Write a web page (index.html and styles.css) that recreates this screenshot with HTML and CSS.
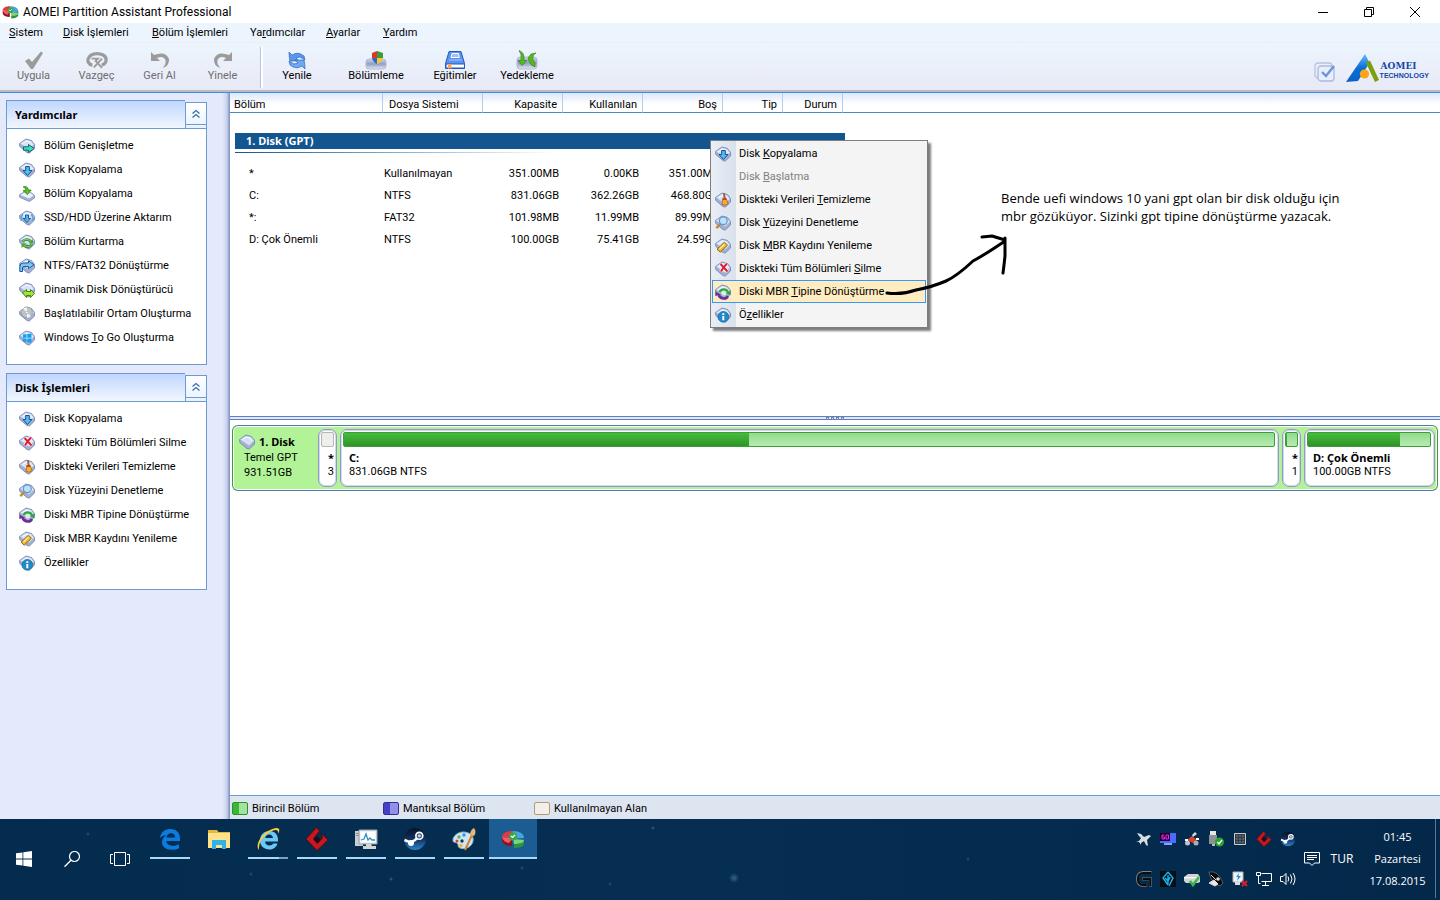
FILE: index.html
```html
<!DOCTYPE html>
<html lang="tr">
<head>
    <meta charset="UTF-8">
    <meta name="viewport" content="width=device-width, initial-scale=1">
    <title>AOMEI Partition Assistant Professional</title>
    <link rel="stylesheet" href="styles.css">
</head>
<body>
    <svg class="sprite" aria-hidden="true">
        <defs>
            <linearGradient id="gBlue" x1="0" y1="0" x2="0" y2="1"><stop offset="0" stop-color="#6db8ff"/><stop offset=".5" stop-color="#0a6fd4"/><stop offset="1" stop-color="#0a63c4"/></linearGradient>
            <linearGradient id="gTray" x1="0" y1="0" x2="0" y2="1"><stop offset="0" stop-color="#cfd6ec"/><stop offset=".5" stop-color="#8f9cc4"/><stop offset="1" stop-color="#e4e8f6"/></linearGradient>
            <linearGradient id="gSteam" x1="0" y1="0" x2="0" y2="1"><stop offset="0" stop-color="#0a1224"/><stop offset=".5" stop-color="#10305f"/><stop offset="1" stop-color="#2a86c8"/></linearGradient>
        </defs>
        <symbol id="disk" viewBox="0 0 16 16">
            <path d="M.5 5.500 7 1 12.500 2.500 15.500 6.500v3.500L10.400 15 8 14.600.8 8.500z" fill="#a3b0d2" stroke="#7080ae" stroke-width=".8"/>
            <path d="M1.200 5.600 7 1.700l5 1.400 3 3.600-5 4.800z" fill="#d5e1f6"/>
            <path d="M3.500 5.800 7.300 3.200l3.600 1 2 2.600" fill="none" stroke="#fff" stroke-width=".8"/>
        </symbol>
        <symbol id="extend" viewBox="0 0 16 16"><use href="#disk"/><path d="M4.500 8.800h5V6.500l5.800 4-5.800 4v-2.300h-5z" fill="#3fe09a" stroke="#05568c" stroke-width=".9"/></symbol>
        <symbol id="copy" viewBox="0 0 16 16"><use href="#disk"/><path d="M6.700 4.500h3.600v4H13L8.500 13.500 4 8.500h2.700z" fill="#5cb8ee" stroke="#0c5595" stroke-width="1"/></symbol>
        <symbol id="partcopy" viewBox="0 0 16 16"><path d="M.5 8.800 5.800 5.400l5 .4 4.700 3.600v2.500l-5.300 3.600L.8 11.300z" fill="#a3b3d8" stroke="#7686b2" stroke-width=".8"/><path d="M1.400 8.900 6 6l4.600.4 4 3-4.500 3z" fill="#eaf0ff"/><path d="M4.200.8C7 .2 9 1 9.400 4h2.800L8.400 8.600 4 4.600h2.700C6.500 2.600 5.800 1.700 4.200.8z" fill="#58c41a" stroke="#24710a" stroke-width=".7"/></symbol>
        <symbol id="ssd" viewBox="0 0 16 16"><use href="#disk"/><path d="M2.500 11A6 6 0 0 1 4 4.300M13.500 11A6 6 0 0 0 12 4.300" fill="none" stroke="#5ba9dd" stroke-width="1.600"/><path d="M6.500 5h3v3.500h2.200L8 12.500 4.300 8.500h2.200z" fill="#5cb0ea" stroke="#0c5595" stroke-width=".9"/></symbol>
        <symbol id="recover" viewBox="0 0 16 16"><use href="#disk"/><path d="M3.500 7.500C6 4.500 10 5 12 7.500M13 10C11 13 7 13.500 4.500 11" fill="none" stroke="#2c7a23" stroke-width="2.600"/><path d="M3.500 7.500C6 4.500 10 5 12 7.500M13 10C11 13 7 13.500 4.500 11" fill="none" stroke="#79cd5b" stroke-width="1.300"/><path d="M14 5v4.200H9.500zM2.500 14V9.500h4.500z" fill="#4ba53a"/></symbol>
        <symbol id="ntfs" viewBox="0 0 16 16"><use href="#disk"/><path d="M.8 13.500V8.500Q.8 5 4.500 5H9.500V2.800l5.500 4-5.500 4V8.500H5q-1.500 0-1.500 1.500v3.500z" fill="#82c4ef" stroke="#1559a0" stroke-width="1"/></symbol>
        <symbol id="dynamic" viewBox="0 0 16 16"><use href="#disk"/><path d="m3.500 11 4-3.500v2h4v-2l4 4-4 4v-2h-4v2z" fill="#a4e333" stroke="#3c7a08" stroke-width=".9"/></symbol>
        <symbol id="bootable" viewBox="0 0 16 16"><use href="#disk"/><circle cx="8" cy="6.500" r="5.400" fill="#bfc4c6" stroke="#8d9498" stroke-width=".7"/><path d="M8 6.500 4 2.800A5.400 5.400 0 0 1 8 1.200zM8 6.500l4 3.700a5.400 5.400 0 0 1-4 1.600z" fill="#f2f4f4"/><circle cx="8" cy="6.500" r="1.300" fill="#fff" stroke="#8d9498" stroke-width=".5"/></symbol>
        <symbol id="wintogo" viewBox="0 0 16 16"><use href="#disk"/><path d="m4 4.600 3.500-.5v3.700H4zM8.300 4l4.200-.6v4.400H8.300zM4 8.500h3.500v3.600L4 11.600zM8.300 8.500h4.200v4.300l-4.200-.6z" fill="#10a0f0"/></symbol>
        <symbol id="delete" viewBox="0 0 16 16"><use href="#disk"/><path d="M5.500 3q3 3 7 7.500M12 2.500Q8.500 6 6 10.500" fill="none" stroke="#fff" stroke-width="3.400"/><path d="M5.500 3q3 3 7 7.500M12 2.500Q8.500 6 6 10.500" fill="none" stroke="#e01c35" stroke-width="2"/></symbol>
        <symbol id="wipe" viewBox="0 0 16 16"><use href="#disk"/><path d="M8 1.300 9.800 1l1 5.500-2 .3z" fill="#a06030"/><path d="M7.800 6.500h3.400l2 5.500q-3 2-6.200.5z" fill="#f0b030" stroke="#b35a18" stroke-width=".8"/><path d="M7.800 6.300h3.600v1.800H7.500z" fill="#c04418"/></symbol>
        <symbol id="check" viewBox="0 0 16 16"><use href="#disk"/><path d="M6 8.500 1.300 13.200" stroke="#b98b3c" stroke-width="2.400"/><circle cx="8.300" cy="5.700" r="3.900" fill="#b9e2fb" stroke="#6893c9" stroke-width="1.200"/></symbol>
        <symbol id="convert" viewBox="0 0 16 16"><use href="#disk"/><path d="M4.500 8C6.500 4.500 11 4.500 13 8" fill="none" stroke="#30a640" stroke-width="2.200"/><path d="M15.500 6.500v5L10.500 9z" fill="#30a640"/><path d="M13 12C11 15.500 6 15.500 3.500 11" fill="none" stroke="#6d2d9b" stroke-width="2.600"/><path d="M.3 12V7.500L6 10.500z" fill="#6d2d9b"/><circle cx="8.800" cy="9.600" r="2" fill="#d7f7d5"/></symbol>
        <symbol id="rebuild" viewBox="0 0 16 16"><use href="#disk"/><path d="m2 11.200 7.500-7 3 3-7.300 7z" fill="#f0b62c" stroke="#8a5a08" stroke-width=".9"/><path d="m4.500 11 5-4.700" stroke="#fff0b0" stroke-width="1.200"/></symbol>
        <symbol id="info" viewBox="0 0 16 16"><use href="#disk"/><circle cx="8.300" cy="9.800" r="5.400" fill="#2289c8" stroke="#11649e" stroke-width=".7"/><path d="M7.300 9h2v4.200h-2zM7.300 6.300h2v1.700h-2z" fill="#fff"/></symbol>

        <symbol id="pie" viewBox="0 0 24 18">
            <path d="M1 7v4c1 3 4 5 10 5V8z" fill="#8f1220"/><path d="M12 8 1 7C1 3 5 1 12 1z" fill="#dc3b45"/><path d="M1 7q1 5 7 6l4-5z" fill="#ef5d62"/>
            <path d="M12 1c7 0 11 3 11 7l-11 1z" fill="#45a6dc"/><path d="M23 8v3l-8-1-3-1z" fill="#1a6ea8"/>
            <path d="m12 9 11 1c0 3-3 4-10 4z" fill="#7fd37a"/><path d="M13 14c7 0 10-1 10-4v4c-1 3-5 4-10 4z" fill="#2c963a"/>
            <circle cx="12" cy="6.500" r="4" fill="#39a845"/><path d="m10 6 1.500 1.500L14 5" fill="none" stroke="#fff" stroke-width="1.200"/>
        </symbol>
        <symbol id="chevrons" viewBox="0 0 10 10"><path d="m1.500 4.500 3.500-3 3.500 3M1.500 8.500l3.500-3 3.500 3" fill="none" stroke="#3f6da6" stroke-width="1.300"/></symbol>
        <symbol id="steam" viewBox="0 0 24 24"><circle cx="12" cy="12" r="11" fill="url(#gSteam)"/><path d="M1.500 13 8 15.600 12 13l6-5" fill="none" stroke="#fff" stroke-width="2.600"/><circle cx="8" cy="16" r="3" fill="#fff"/><circle cx="16.300" cy="8.800" r="4.300" fill="#fff"/><circle cx="16.300" cy="8.800" r="2.600" fill="#24476e"/><circle cx="16.300" cy="8.800" r="1.600" fill="#c8d6e4"/></symbol>
        <symbol id="redgem" viewBox="0 0 24 24"><path d="m11.500.5 3 3.500-6 7.500 4 5L17.500 11l-1-4.500L23 13 12 23.500 1 12z" fill="#c8171f" stroke="#5b0a10" stroke-width="1"/><path d="m12 9 3.500 3.500-3.500 4-3.500-4z" fill="#1c0d18"/></symbol>
    </svg>

    <header class="titlebar">
        <svg class="app-icon"><use href="#pie"/></svg>
        <h1>AOMEI Partition Assistant Professional</h1>
        <div class="window-buttons">
            <button aria-label="Simge durumuna küçült"><svg viewBox="0 0 12 12"><path d="M1 6.500h10"/></svg></button>
            <button aria-label="Önceki boyut"><svg viewBox="0 0 12 12"><path d="M1.500 3.500h7v7h-7zM3.500 3.500v-2h7v7h-2"/></svg></button>
            <button aria-label="Kapat"><svg viewBox="0 0 12 12"><path d="m1 1 10 10M11 1 1 11"/></svg></button>
        </div>
    </header>

    <nav class="menubar">
        <button><u>S</u>istem</button>
        <button><u>D</u>isk İşlemleri</button>
        <button><u>B</u>ölüm İşlemleri</button>
        <button>Ya<u>r</u>dımcılar</button>
        <button><u>A</u>yarlar</button>
        <button><u>Y</u>ardım</button>
    </nav>

    <div class="toolbar">
        <div class="tools">
            <button class="tool" disabled>
                <svg viewBox="0 0 22 20"><path d="m2 11 4-2.500L9 12 18 1.500 20 3 10 19H8z" fill="#9b9b9b"/></svg>
                Uygula
            </button>
            <button class="tool" disabled>
                <svg viewBox="0 0 24 20"><path d="M7 15.500C2.500 15 1.500 11 2.500 8.500 4 4.500 7.500 3 12 3s10 2 10 6.500c0 3.500-2.500 5.500-5 6" fill="none" stroke="#9b9b9b" stroke-width="3.500"/><path d="M6 8.500h7L10.500 11l7 7.500M17.500 8.500l-9 9.500" stroke="#9b9b9b" stroke-width="2" fill="none"/></svg>
                Vazgeç
            </button>
            <button class="tool" disabled>
                <svg viewBox="0 0 22 20"><path d="M2 2v9h9L8 8q6-3 8.500 2 1 4-3 8 7-2 6.500-9Q17 .5 5 5z" fill="#9b9b9b"/></svg>
                Geri Al
            </button>
            <button class="tool" disabled>
                <svg viewBox="0 0 22 20"><path d="M20 2v9h-9l3-3Q8 5 5.500 10q-1 4 3 8Q1.500 16 2 9 5 .5 17 5z" fill="#9b9b9b"/></svg>
                Yinele
            </button>
            <span class="tool-divider"></span>
            <button class="tool">
                <svg viewBox="0 0 20 20"><path d="M2 2 5 5q6-4 12 1l1 4-5-3-4 1 3 3H3Q2 7 2 2z" fill="#5b96ea" stroke="#2f64bd" stroke-width=".7"/><path d="m18 19-3-3q-6 4-12-1l-1-4 5 3 4-1-3-3h9q1 4 1 9z" fill="#6ca8f5" stroke="#2f64bd" stroke-width=".7"/></svg>
                Yenile
            </button>
            <button class="tool">
                <svg viewBox="0 0 22 20"><rect x="1" y="9" width="20" height="10" rx="3" fill="url(#gTray)" stroke="#b3bbd6"/><path d="M12 1 7 3v5h5z" fill="#d93b28"/><path d="m12 1 6 2v5h-6z" fill="#3b9a3c"/><path d="M7 8h5v6Q8 12 7 8z" fill="#2e69c8"/><path d="M12 8h6q-1 4-6 6z" fill="#f6c62f"/></svg>
                Bölümleme
            </button>
            <button class="tool">
                <svg viewBox="0 0 22 20"><path d="M5 1.500h12l3.500 12v5H1.500v-5z" fill="#5b92ee" stroke="#2458c4"/><path d="M2 14h18.500v4H2z" fill="#fff" stroke="#2458c4"/><path d="M8 3.500h6.500l.8 4H7z" fill="#9dc0fa" stroke="#fff"/><path d="M5 10h13" stroke="#a8c8ff"/><path d="M4 14h3.500v5L6 18l-2 1z" fill="#f7a95a"/></svg>
                Eğitimler
            </button>
            <button class="tool">
                <svg viewBox="0 0 22 20"><rect x="1" y="7" width="20" height="12" rx="3" fill="url(#gTray)" stroke="#b3bbd6"/><path d="M3 .5q6 2 5 10h3l-5 5-4-5h3Q6 4 3 .5z" fill="#55b81e" stroke="#2d7a0c" stroke-width=".6"/><path d="M20 3q-4 2-3 7l2 3v4q-5-2-6-6l-1-3 3-4z" fill="#55b81e" stroke="#2d7a0c" stroke-width=".6"/></svg>
                Yedekleme
            </button>
        </div>
        <div class="brand">
            <svg class="brand-check" viewBox="0 0 22 20"><rect x="1" y="1" width="17" height="15" rx="3" fill="none" stroke="#b3c3e4" stroke-width="1.300"/><rect x="4" y="4" width="16" height="15" rx="3" fill="#e6edfb" stroke="#a9bbe0" stroke-width="1.300"/><path d="m8 10 4 4 8-10" fill="none" stroke="#6f93d4" stroke-width="2.400"/></svg>
            <svg class="brand-logo" viewBox="0 0 34 28"><path d="M1 28 20 0l4.500 9L13 27z" fill="url(#gBlue)"/><path d="M21 9 25 6.500l9 19.500-4 2z" fill="#7c9f0d"/><circle cx="19.500" cy="20" r="4.600" fill="#ffa412"/></svg>
            <div class="brand-text"><strong>AOMEI</strong><span>TECHNOLOGY</span></div>
        </div>
    </div>

    <div class="workspace">
        <aside class="sidebar">
            <section class="panel">
                <div class="panel-head">
                    <h2>Yardımcılar</h2>
                    <button class="collapse" aria-label="Yardımcılar panelini daralt"><svg><use href="#chevrons"/></svg></button>
                </div>
                <div class="panel-body">
                    <button><svg><use href="#extend"/></svg>Bölüm Genişletme</button>
                    <button><svg><use href="#copy"/></svg>Disk Kopyalama</button>
                    <button><svg><use href="#partcopy"/></svg>Bölüm Kopyalama</button>
                    <button><svg><use href="#ssd"/></svg>SSD/HDD Üzerine Aktarım</button>
                    <button><svg><use href="#recover"/></svg>Bölüm Kurtarma</button>
                    <button><svg><use href="#ntfs"/></svg>NTFS/FAT32 Dönüştürme</button>
                    <button><svg><use href="#dynamic"/></svg>Dinamik Disk Dönüştürücü</button>
                    <button><svg><use href="#bootable"/></svg>Başlatılabilir Ortam Oluşturma</button>
                    <button><svg><use href="#wintogo"/></svg><span>Windows <u>T</u>o Go Oluşturma</span></button>
                </div>
            </section>

            <section class="panel">
                <div class="panel-head">
                    <h2>Disk İşlemleri</h2>
                    <button class="collapse" aria-label="Disk İşlemleri panelini daralt"><svg><use href="#chevrons"/></svg></button>
                </div>
                <div class="panel-body">
                    <button><svg><use href="#copy"/></svg>Disk Kopyalama</button>
                    <button><svg><use href="#delete"/></svg>Diskteki Tüm Bölümleri Silme</button>
                    <button><svg><use href="#wipe"/></svg>Diskteki Verileri Temizleme</button>
                    <button><svg><use href="#check"/></svg>Disk Yüzeyini Denetleme</button>
                    <button><svg><use href="#convert"/></svg>Diski MBR Tipine Dönüştürme</button>
                    <button><svg><use href="#rebuild"/></svg>Disk MBR Kaydını Yenileme</button>
                    <button><svg><use href="#info"/></svg>Özellikler</button>
                </div>
            </section>
        </aside>

        <main class="content">
            <div class="list-area">
                <table class="partitions">
                    <colgroup>
                        <col class="col-name"><col class="col-fs"><col class="col-size"><col class="col-size"><col class="col-size"><col class="col-small"><col class="col-small"><col>
                    </colgroup>
                    <thead>
                        <tr><th>Bölüm</th><th>Dosya Sistemi</th><th class="num">Kapasite</th><th class="num">Kullanılan</th><th class="num">Boş</th><th class="num">Tip</th><th class="num">Durum</th><td></td></tr>
                    </thead>
                    <tbody>
                        <tr><td class="group" colspan="8"><div class="group-title">1. Disk (GPT)</div><div class="group-line"></div></td></tr>
                        <tr><td>*</td><td>Kullanılmayan</td><td class="num">351.00MB</td><td class="num">0.00KB</td><td class="num">351.00MB</td></tr>
                        <tr><td>C:</td><td>NTFS</td><td class="num">831.06GB</td><td class="num">362.26GB</td><td class="num">468.80GB</td></tr>
                        <tr><td>*:</td><td>FAT32</td><td class="num">101.98MB</td><td class="num">11.99MB</td><td class="num">89.99MB</td></tr>
                        <tr><td>D: Çok Önemli</td><td>NTFS</td><td class="num">100.00GB</td><td class="num">75.41GB</td><td class="num">24.59GB</td></tr>
                    </tbody>
                </table>

                <div class="context-menu">
                    <button><svg><use href="#copy"/></svg><span>Disk <u>K</u>opyalama</span></button>
                    <button disabled><svg></svg><span>Disk <u>B</u>aşlatma</span></button>
                    <button><svg><use href="#wipe"/></svg><span>Diskteki Verileri <u>T</u>emizleme</span></button>
                    <button><svg><use href="#check"/></svg><span>Disk <u>Y</u>üzeyini Denetleme</span></button>
                    <button><svg><use href="#rebuild"/></svg><span>Disk <u>M</u>BR Kaydını Yenileme</span></button>
                    <button><svg><use href="#delete"/></svg><span>Diskteki Tüm Bölümleri <u>S</u>ilme</span></button>
                    <button class="selected"><svg><use href="#convert"/></svg><span>Diski MBR <u>T</u>ipine Dönüştürme</span></button>
                    <button><svg><use href="#info"/></svg><span>Ö<u>z</u>ellikler</span></button>
                </div>

                <svg class="arrow" viewBox="0 0 124 66" aria-hidden="true"><path d="M2 60q15 2 29-3 16-3 30-9 11-5 27-20Q101 21 120 8M97 4l10-1 13 4M120 5v18l-1 9-1 8"/></svg>
                <p class="note">Bende uefi windows 10 yani gpt olan bir disk olduğu için<br>mbr gözüküyor. Sizinki gpt tipine dönüştürme yazacak.</p>
            </div>

            <div class="splitter"><i></i><i></i><i></i><i></i></div>

            <div class="map-area">
                <div class="disk-row">
                    <div class="disk-info">
                        <strong><svg><use href="#disk"/></svg>1. Disk</strong>
                        <span>Temel GPT</span>
                        <span>931.51GB</span>
                    </div>
                    <div class="part tiny">
                        <div class="bar unused"></div>
                        <strong>*</strong><span>3</span>
                    </div>
                    <div class="part wide">
                        <div class="bar"><div class="fill" style="width: 43.6%"></div></div>
                        <strong>C:</strong><span>831.06GB NTFS</span>
                    </div>
                    <div class="part tiny">
                        <div class="bar"><div class="fill" style="width: 12%"></div></div>
                        <strong>*</strong><span>1</span>
                    </div>
                    <div class="part medium">
                        <div class="bar"><div class="fill" style="width: 75.4%"></div></div>
                        <strong>D: Çok Önemli</strong><span>100.00GB NTFS</span>
                    </div>
                </div>
            </div>

            <footer class="legend">
                <span><i class="primary"></i>Birincil Bölüm</span>
                <span><i class="logical"></i>Mantıksal Bölüm</span>
                <span><i class="free"></i>Kullanılmayan Alan</span>
            </footer>
        </main>
    </div>

    <div class="taskbar">
        <div class="system-buttons">
            <button aria-label="Başlat"><svg viewBox="0 0 16 16"><path d="m0 2.300 6.500-.9v6.200H0zM7.300 1.300 16 0v7.600H7.300zM0 8.400h6.500v6.200L0 13.700zM7.300 8.400H16V16l-8.700-1.300z" fill="#fff"/></svg></button>
            <button aria-label="Ara"><svg viewBox="0 0 16 16"><circle cx="10.500" cy="5.500" r="5" fill="none" stroke="#fff" stroke-width="1.200"/><path d="M7 9.200.5 15.700" stroke="#fff" stroke-width="1.400"/></svg></button>
            <button aria-label="Görev görünümü"><svg class="taskview" viewBox="0 0 20 16"><path d="M4.500 1.500h11v13h-11zM3 3.500H.5v9H3M17 3.500h2.500v9H17" fill="none" stroke="#fff"/></svg></button>
        </div>
        <div class="apps">
            <button class="running" aria-label="Edge"><svg viewBox="0 0 24 24"><path d="M2 11C3 4 8 2 12.500 2 18.500 2 22 6 22 11.500V14H8.300c.3 3.500 3.700 4.800 7 4.800 2.200 0 4.200-.6 5.700-1.500v4c-2 1-4.500 1.500-7 1.500C7.500 22.800 4 19.500 4 15.300c0-3.100 1.600-5.700 4.500-7.100C5.500 8.200 3.500 9.500 2 11zM8.500 10.500H17c0-3-1.500-4.300-4-4.300S8.800 8 8.500 10.500z" fill="#0b7be0"/></svg></button>
            <button aria-label="Dosya Gezgini"><svg viewBox="0 0 24 24"><path d="M1 3h9l1.500 2H23v16H1z" fill="#e9b63c"/><path d="M1 6h22v15H1z" fill="#ffe28a"/><path d="M5 13h14v9h-4v-4H9v4H5z" fill="#2fb1ea"/></svg></button>
            <button class="running grouped" aria-label="Internet Explorer"><svg viewBox="0 0 24 24"><path d="M22 14.500H9c.3 2.800 2 4 4.500 4 2 0 3-.8 3.700-2h4.300c-1.300 4-4.500 6-8.200 6C8 22.500 4 19 4 13.500S8 4 13.200 4C19 4 22.500 8 22 14.500zM9.200 11H17c-.3-2.200-1.700-3.400-3.800-3.400-2.200 0-3.600 1.300-4 3.400z" fill="#6cc9f5"/><path d="M3 23C-1 19 4 9 12 4q9-5 11-2 1 1-1 5 .5-3-1-3.800Q18 2 11 7 2 14 3 23z" fill="#f7cf3a"/></svg></button>
            <button class="running" aria-label="Oyun"><svg><use href="#redgem"/></svg></button>
            <button class="running" aria-label="Görev Yöneticisi"><svg viewBox="0 0 24 24"><path d="M1 4h8v15H1z" fill="#c9cdd0"/><path d="M2 6h5v1H2zM2 8h5v1H2z" fill="#889096"/><path d="M5 3h18v14H5z" fill="#e0e5e8" stroke="#98a2a8"/><path d="M6.500 4.500h15v11h-15z" fill="#fff"/><path d="M7 13l3-1 2-5 2 6 2-2 2 2 3 0" fill="none" stroke="#2c8fc4" stroke-width="1.300"/><path d="M12 17h5l1 2h4v3H9v-3h3z" fill="#d1d6d9"/></svg></button>
            <button class="running" aria-label="Steam"><svg><use href="#steam"/></svg></button>
            <button class="running" aria-label="Paint"><svg viewBox="0 0 24 24"><path d="M11 5c7 0 11 4 10 9-1 6-8 9-13 7-3-1-1-4-3-5s-4 0-4-3c0-4 5-8 10-8z" fill="#cfe6f3" stroke="#8fb4ca"/><circle cx="7" cy="10" r="1.700" fill="#56b847"/><circle cx="12" cy="8" r="1.700" fill="#3b8ee0"/><circle cx="5" cy="14" r="1.500" fill="#e23b30"/><circle cx="10" cy="14" r="1.700" fill="#173a58"/><circle cx="9" cy="18.500" r="1.700" fill="#f0b62c"/><path d="m13 23 7-15" stroke="#d08430" stroke-width="2"/><path d="M18 8q0-5 4-7 3 4 0 8z" fill="#e6b776"/></svg></button>
            <button class="running active" aria-label="AOMEI Partition Assistant"><svg><use href="#pie"/></svg></button>
        </div>
        <div class="tray">
            <button aria-label="Uçak"><svg viewBox="0 0 16 16"><path d="m1 2 4 1 3 3 5-2 2 1-4 4 1 6-2-1-2-4-3 2v2l-2-3-3-1h3l2-3L3 5z" fill="#d9dde0"/></svg></button>
            <button aria-label="Ekran 60"><svg viewBox="0 0 16 16"><path d="M0 2h16v10H0z" fill="#4b6bff"/><path d="M0 2h10v8H0z" fill="#170030"/><path d="M4.500 4H2v4h2.500V6H2.500M6 4h2.500v4H6z" fill="none" stroke="#ff20e8"/><path d="M4 12h8v2H4z" fill="#8aa0ff"/></svg></button>
            <button aria-label="Araç"><svg viewBox="0 0 16 16"><path d="M3 9 8 5l5 4-4 3z" fill="#d8452a"/><path d="m8 4 3-3 2 2-4 3z" fill="#d6d9dc"/><circle cx="3.500" cy="12" r="2.500" fill="#bfc5c9"/><circle cx="12" cy="12" r="2.500" fill="#a8afb4"/><path d="M1 8h3v2H1zM12 7h3v2h-3z" fill="#fff"/></svg></button>
            <button aria-label="USB"><svg viewBox="0 0 16 16"><path d="M2 0h6v4H2z" fill="#e5e5e5"/><path d="M1 4h8v9H1z" fill="#8c9296"/><path d="M4 13h3v2H4z" fill="#bbb"/><circle cx="11.500" cy="11" r="4.500" fill="#28a52e"/><path d="m9.500 11 1.500 2 3-4" fill="none" stroke="#fff" stroke-width="1.300"/></svg></button>
            <button aria-label="Izgara"><svg viewBox="0 0 16 16"><path d="M2.500 2.500h11v11h-11z" fill="#1c2733" stroke="#d3d6d8"/><path d="M5 2.500v11M8 2.500v11M11 2.500v11M2.500 5h11M2.500 8h11M2.500 11h11" stroke="#75828c" stroke-width=".7"/></svg></button>
            <button aria-label="Oyun"><svg><use href="#redgem"/></svg></button>
            <button aria-label="Steam"><svg><use href="#steam"/></svg></button>
            <button aria-label="Logitech"><svg viewBox="0 0 16 16"><path d="M15.500 1.500H7Q1.500 2 1.500 8t6 6.500h3M6 8h8.500v7.500" fill="none" stroke="#7b838a" stroke-width="3"/><path d="M15.500 2H7Q2 2.500 2 8t5.500 6.200h3M6.500 8.200h7.800V15" fill="none" stroke="#0a0c0f" stroke-width="2.200"/></svg></button>
            <button aria-label="Fraps"><svg viewBox="0 0 16 16"><path d="M0 0h16v16H0z" fill="#0b0f13"/><path d="m8 1 5 6-4 8M8 1 3 7l5 7M8 4v9M5 7l3 3 2-4" fill="none" stroke="#16b7ec" stroke-width="1.400"/></svg></button>
            <button aria-label="Disk"><svg viewBox="0 0 16 16"><path d="m0 6 4-3h10l2 3v5l-2 1H2l-2-2z" fill="#cfd3d6"/><path d="M0 6h16v1.500H0z" fill="#f3f4f5"/><path d="m6 10 3 4 6-8" fill="none" stroke="#3bb54a" stroke-width="2.600"/></svg></button>
            <button aria-label="Kılıç"><svg viewBox="0 0 16 16"><path d="M1 1q9-2 14 11l-3 3Q3 12 1 1z" fill="#0a0a0a" stroke="#8b8b8b" stroke-width=".6"/><path d="m3 4 5 5M1 12l5-3 4 4-3 2z" stroke="#ddd" fill="#e8e8e8"/><circle cx="10" cy="8" r="1.800" fill="#ddd"/></svg></button>
            <button aria-label="Güç"><svg viewBox="0 0 16 16"><path d="M1 1h10v10H1z" fill="#f4f4f4" stroke="#b5b5b5"/><path d="M7 2 4 6h2l-1 4 4-5H6.500z" fill="#1f8fe0"/><path d="M3 11h5v3H3z" fill="#ddd"/><path d="m10 10 5 5M15 10l-5 5" stroke="#e11d2c" stroke-width="2"/></svg></button>
            <button aria-label="Ağ"><svg viewBox="0 0 16 16"><path d="M5.500 2.500h10v8h-10M9.500 10.500v4M6 14.500h7M.5 1.500h4v3h-4zM2.500 4.500v8h2" fill="none" stroke="#fff"/></svg></button>
            <button aria-label="Ses"><svg viewBox="0 0 16 16"><path d="M.5 5.500H3l3-3v11l-3-3H.5z" fill="none" stroke="#fff"/><path d="M8 5.500q1.500 2.500 0 5M10.500 3.500q3 4.500 0 9M13 2q4 6 0 12" fill="none" stroke="#fff"/></svg></button>
        </div>
        <button class="notifications" aria-label="Bildirimler"><svg viewBox="0 0 16 16"><path d="M.5 1.500h15v10.500h-5L8 14.500 5.500 12h-5zM3 4.500h10M3 6.500h10M3 8.500h7" fill="none" stroke="#fff"/></svg></button>
        <span class="language">TUR</span>
        <div class="clock"><span>01:45</span><span>Pazartesi</span><span>17.08.2015</span></div>
        <button class="show-desktop" aria-label="Masaüstünü göster"></button>
    </div>
</body>
</html>
```
FILE: styles.css
```css
* {
    box-sizing: border-box;
}

body {
    margin: 0;
    min-height: 100vh;
    display: flex;
    flex-direction: column;
    font-family: Roboto, "Noto Sans", sans-serif;
    font-size: 11px;
    line-height: 14px;
    color: #000;
    background-color: #fff;
}

button {
    padding: 0;
    border: none;
    background: none;
    font: inherit;
    color: inherit;
    white-space: nowrap;
}

svg {
    display: block;
    flex-shrink: 0;
}

strong {
    font-family: "Noto Sans", sans-serif;
}

u {
    text-underline-offset: 1px;
}

.sprite {
    position: absolute;
    width: 0;
    height: 0;
}

/* Title bar */
.titlebar {
    display: flex;
    align-items: center;
    height: 23px;
    padding-left: 2px;
}

.app-icon {
    width: 17px;
    height: 14px;
}

.titlebar h1 {
    margin: 0 auto 0 4px;
    font-size: 12px;
    font-weight: normal;
}

.window-buttons {
    display: flex;
    align-items: center;
    padding-right: 2px;
}

.window-buttons button {
    width: 46px;
    height: 20px;
    display: flex;
    align-items: center;
    justify-content: center;
}

.window-buttons svg {
    width: 12px;
    height: 12px;
    fill: none;
    stroke: #000;
}

/* Menu bar */
.menubar {
    display: grid;
    grid-template-columns: 54px 89px 98px 76px 57px auto;
    justify-content: start;
    height: 20px;
    padding-left: 9px;
    background-color: #ecf5fd;
    border-bottom: 1px solid #f0ecf0;
}

.menubar button {
    text-align: left;
}

/* Toolbar */
.toolbar {
    display: flex;
    justify-content: space-between;
    height: 50px;
    padding-left: 2px;
    background: linear-gradient(#ecf5fd, #e8e9f6);
    border-bottom: 1px solid #3f8fdd;
    box-shadow: inset 0 -2px #b9bcc8;
}

.tools {
    display: grid;
    grid-template-columns: repeat(4, 63px) 10px 66px 92px 66px 78px;
}

.tool {
    display: flex;
    flex-direction: column;
    align-items: center;
    padding-top: 7px;
}

.tool svg {
    width: 22px;
    height: 20px;
    margin-bottom: -1px;
}

.tool:disabled {
    color: #6d6d6d;
}

.tool-divider {
    width: 3px;
    margin: 4px 6px;
    background-color: #fff;
    border-left: 1px solid #b9c4dc;
}

.brand {
    display: flex;
    align-items: center;
    padding-right: 11px;
}

.brand-check {
    width: 22px;
    height: 20px;
    margin: 9px 9px 0 0;
}

.brand-logo {
    width: 34px;
    height: 28px;
    margin-right: 1px;
}

.brand-text {
    display: flex;
    flex-direction: column;
    color: #1747a6;
    line-height: 10px;
    padding-top: 6px;
}

.brand-text strong {
    font-family: "DejaVu Serif", serif;
    font-size: 9px;
    padding-left: 1px;
}

.brand-text span {
    font-family: "Liberation Sans", sans-serif;
    font-size: 7px;
    font-weight: bold;
}

/* Workspace */
.workspace {
    flex: 1;
    display: flex;
}

.sidebar {
    width: 230px;
    flex-shrink: 0;
    padding: 7px 22px 7px 6px;
    background: linear-gradient(to left, #8798c4 1px, #b4bedf 2px, #d0d7f0 4px, #e4e9fc 8px);
}

.panel {
    width: 201px;
    margin-bottom: 8px;
}

.panel-head {
    display: flex;
    height: 28px;
}

.panel-head h2 {
    flex: 1;
    margin: 0;
    padding-left: 8px;
    font-family: "Noto Sans", sans-serif;
    font-size: 11px;
    line-height: 28px;
    background: linear-gradient(#c0d6ff, #f2f7ff);
    border: solid #6c9bd2;
    border-width: 1px 0 0 1px;
}

.collapse {
    width: 22px;
    margin-top: 2px;
    padding-bottom: 4px;
    display: flex;
    align-items: center;
    justify-content: center;
    background:
        linear-gradient(#6c9bd2, #6c9bd2) no-repeat 0 21px / 100% 1px,
        linear-gradient(#fff, #e8f2ff);
    border: 1px solid #6c9bd2;
    border-bottom: none;
}

.collapse svg {
    width: 10px;
    height: 10px;
}

.panel-body {
    display: flex;
    flex-direction: column;
    padding: 5px 0 14px 12px;
    border: 1px solid #6c9bd2;
    background-color: #fff;
}

.panel-body button {
    display: flex;
    align-items: center;
    gap: 9px;
    height: 24px;
}

.panel-body svg,
.context-menu svg {
    width: 16px;
    height: 16px;
}

.content {
    flex: 1;
    min-width: 0;
    display: flex;
    flex-direction: column;
}

/* Partition list */
.list-area {
    position: relative;
    height: 323px;
}

.partitions {
    width: 100%;
    table-layout: fixed;
    border-collapse: separate;
    border-spacing: 0;
}

.col-name {
    width: 153px;
}

.col-fs {
    width: 100px;
}

.col-size {
    width: 80px;
}

.col-small {
    width: 60px;
}

.partitions th,
.partitions thead td {
    height: 20px;
    padding: 5px 5px 0 6px;
    font-weight: normal;
    text-align: left;
    background: linear-gradient(#dce8f8, #fff 60%);
    border-bottom: 1px solid #4f86c8;
}

.partitions th {
    border-right: 1px solid #b5cdf0;
}

.partitions th:first-child {
    padding-left: 4px;
}

.partitions tbody td {
    height: 22px;
    padding: 0 1px;
}

.partitions tbody td:first-child {
    padding-left: 19px;
}

.partitions th.num {
    text-align: right;
}

.partitions tbody .num {
    text-align: right;
    padding-right: 4px;
}

.partitions tbody td.group {
    height: 50px;
    padding: 20px 0 0 5px;
    vertical-align: top;
}

.group-title {
    width: 610px;
    height: 16px;
    padding-left: 11px;
    font-family: "Noto Sans", sans-serif;
    line-height: 16px;
    font-weight: bold;
    color: #fff;
    background-color: #13568f;
}

.group-line {
    width: 320px;
    height: 1px;
    margin-top: 3px;
    background: linear-gradient(to right, #13568f, #fff);
}

/* Context menu */
.context-menu {
    position: absolute;
    left: 480px;
    top: 47px;
    width: 218px;
    padding: 1px;
    background: linear-gradient(to right, #e9eef6, #d9e1ec 25px, #f4f4f4 25px);
    border: 1px solid #7d7d7d;
    box-shadow: 3px 3px 2px rgba(0, 0, 0, 0.5);
}

.context-menu button {
    display: flex;
    align-items: center;
    gap: 8px;
    width: 100%;
    height: 23px;
    padding-left: 2px;
    border: 1px solid transparent;
}

.context-menu button:disabled {
    color: #808080;
}

.context-menu button.selected {
    background-color: #ffecc0;
    border-color: #3399ff;
}

.arrow {
    position: absolute;
    left: 655px;
    top: 140px;
    width: 124px;
    height: 66px;
    fill: none;
    stroke: #000;
    stroke-width: 3;
    stroke-linecap: round;
    stroke-linejoin: round;
}

.note {
    position: absolute;
    left: 771px;
    top: 96px;
    margin: 0;
    font-family: "Open Sans", sans-serif;
    font-size: 13px;
    line-height: 18px;
    white-space: nowrap;
}

.splitter {
    display: flex;
    justify-content: center;
    gap: 2px;
    height: 4px;
    border: solid #5f7fc0;
    border-width: 1px 0;
    background-color: #dfe8fa;
}

.splitter i {
    width: 3px;
    height: 3px;
    border: 1px solid #6f84b0;
}

/* Disk map */
.map-area {
    flex: 1;
    padding: 5px 2px;
}

.disk-row {
    display: flex;
    gap: 3px;
    padding: 3px 2px;
    border: 1px solid #4f79b0;
    border-left-color: #3f9a35;
    border-right-color: #3f9a35;
    border-radius: 6px;
    background-color: #b1f396;
    box-shadow: inset 0 0 0 1px #fff;
}

.disk-info {
    display: flex;
    flex-direction: column;
    width: 80px;
    padding: 5px 0 0 9px;
    line-height: 15px;
}

.disk-info strong {
    display: flex;
    gap: 4px;
    margin-left: -5px;
}

.disk-info svg {
    width: 16px;
    height: 16px;
}

.part {
    display: flex;
    flex-direction: column;
    height: 58px;
    padding: 2px 3px 2px 2px;
    border: 1px solid #8f9bc6;
    border-radius: 7px;
    background-color: #fff;
    box-shadow: inset 0 0 0 1px #d3d8ec;
}

.part strong,
.part span {
    padding-left: 6px;
}

.part.tiny {
    width: 19px;
    padding-right: 2px;
}

.tiny strong,
.tiny span {
    padding: 0;
    text-align: right;
}

.wide {
    flex: 1;
}

.medium {
    width: 131px;
}

.bar {
    height: 15px;
    margin-bottom: 4px;
    border: 1px solid #3c9e38;
    border-radius: 2px;
    background: linear-gradient(#92da8e, #b6ecb0);
}

.bar.unused {
    border-color: #bdb5ac;
    background: #eee;
}

.fill {
    height: 100%;
    background: linear-gradient(#46bd3c, #2f9428);
}

.legend {
    display: grid;
    grid-template-columns: 151px 151px auto;
    justify-content: start;
    height: 24px;
    padding-left: 2px;
    border-top: 1px solid #6b9ad8;
    background-color: #dde5f1;
}

.legend span {
    display: flex;
    align-items: center;
    gap: 4px;
    padding-top: 2px;
}

.legend i {
    width: 16px;
    height: 13px;
    border: 1px solid #2b912a;
    border-radius: 2px;
}

.legend .primary {
    background: linear-gradient(to right, #3cb634 6px, #a4e39e 6px);
}

.legend .logical {
    border-color: #332d9a;
    background: linear-gradient(to right, #4540c4 6px, #9390e8 6px);
}

.legend .free {
    border-color: #bb986c;
    background-color: #f1efec;
}

/* Taskbar */
.taskbar {
    display: flex;
    align-items: stretch;
    height: 81px;
    padding-bottom: 2px;
    color: #fff;
    font-family: "Open Sans", sans-serif;
    background:
        radial-gradient(circle at 734px 59px, rgba(130, 180, 210, 0.4), transparent 5px),
        radial-gradient(circle at 391px 60px, rgba(130, 180, 210, 0.4), transparent 2px),
        radial-gradient(circle at 653px 9px, rgba(130, 180, 210, 0.4), transparent 2px),
        radial-gradient(circle at 968px 40px, rgba(130, 180, 210, 0.3), transparent 2px),
        radial-gradient(circle at 251px 55px, rgba(130, 180, 210, 0.3), transparent 2px),
        radial-gradient(circle at 522px 49px, rgba(130, 180, 210, 0.3), transparent 2px),
        radial-gradient(circle at 610px 65px, rgba(130, 180, 210, 0.3), transparent 2px),
        radial-gradient(circle at 88px 15px, rgba(130, 180, 210, 0.3), transparent 2px),
        linear-gradient(to right, #042c4e, #062e52 50%, #03284a);
}

.taskbar button {
    display: flex;
    align-items: center;
    justify-content: center;
}

.system-buttons,
.apps {
    display: flex;
}

.system-buttons button {
    width: 48px;
}

.system-buttons svg {
    width: 16px;
    height: 16px;
}

.system-buttons .taskview {
    width: 20px;
}

.apps {
    align-items: flex-start;
    gap: 1px;
    margin-left: 2px;
}

.apps button {
    width: 48px;
    height: 40px;
    background: no-repeat center bottom / 40px 2px;
}

.apps svg {
    width: 24px;
    height: 24px;
}

.apps .running {
    background-image: linear-gradient(#a9d8fb, #a9d8fb);
}

.apps .grouped {
    background-image: linear-gradient(to right, #a9d8fb 31px, #7d9fb9 31px);
}

.apps .active {
    background-color: #1b5c93;
    background-size: 100% 2px;
}

.tray {
    display: grid;
    grid-template-columns: repeat(7, 24px);
    grid-template-rows: 40px 40px;
    margin-left: auto;
}

.tray svg,
.notifications svg {
    width: 16px;
    height: 16px;
}

.notifications {
    width: 24px;
}

.language {
    width: 36px;
    align-self: center;
    text-align: center;
    font-size: 12px;
}

.clock {
    display: flex;
    flex-direction: column;
    width: 75px;
    padding-top: 7px;
    line-height: 22px;
    font-size: 11px;
    text-align: center;
}

.taskbar .show-desktop {
    width: 5px;
    border-left: 1px solid #5a7890;
}
```
